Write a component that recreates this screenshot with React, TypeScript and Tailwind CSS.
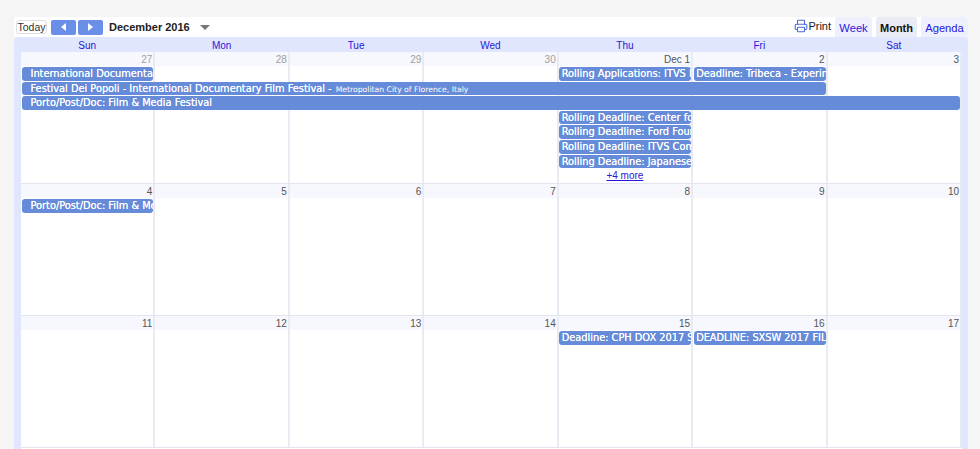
import { Printer } from 'lucide-react';

type CalEvent = { title: string; where?: string; col: string; row: string; sunday?: boolean };
type Week = { days: { label: string; muted?: boolean }[]; events: CalEvent[]; more?: boolean };

const dayNames = ['Sun', 'Mon', 'Tue', 'Wed', 'Thu', 'Fri', 'Sat'];

const columns = ['col-start-1', 'col-start-2', 'col-start-3', 'col-start-4', 'col-start-5', 'col-start-6', 'col-start-7'];

const weeks: Week[] = [
  {
    days: [
      { label: '27', muted: true },
      { label: '28', muted: true },
      { label: '29', muted: true },
      { label: '30', muted: true },
      { label: 'Dec 1' },
      { label: '2' },
      { label: '3' },
    ],
    events: [
      { title: 'International Documentary Film Festival', col: 'col-start-1', row: 'row-start-2', sunday: true },
      { title: 'Rolling Applications: ITVS Linear', col: 'col-start-5', row: 'row-start-2' },
      { title: 'Deadline: Tribeca - Experiments', col: 'col-start-6', row: 'row-start-2' },
      {
        title: 'Festival Dei Popoli - International Documentary Film Festival -',
        where: 'Metropolitan City of Florence, Italy',
        col: 'col-start-1 col-span-6',
        row: 'row-start-3',
        sunday: true,
      },
      { title: 'Porto/Post/Doc: Film & Media Festival', col: 'col-start-1 col-span-7', row: 'row-start-4', sunday: true },
      { title: 'Rolling Deadline: Center for Asian', col: 'col-start-5', row: 'row-start-5' },
      { title: 'Rolling Deadline: Ford Foundation', col: 'col-start-5', row: 'row-start-6' },
      { title: 'Rolling Deadline: ITVS Community', col: 'col-start-5', row: 'row-start-7' },
      { title: 'Rolling Deadline: Japanese Foundation', col: 'col-start-5', row: 'row-start-8' },
    ],
    more: true,
  },
  {
    days: ['4', '5', '6', '7', '8', '9', '10'].map((label) => ({ label })),
    events: [{ title: 'Porto/Post/Doc: Film & Media Festival', col: 'col-start-1', row: 'row-start-2', sunday: true }],
  },
  {
    days: ['11', '12', '13', '14', '15', '16', '17'].map((label) => ({ label })),
    events: [
      { title: 'Deadline: CPH DOX 2017 Submissions', col: 'col-start-5', row: 'row-start-2' },
      { title: 'DEADLINE: SXSW 2017 FILM', col: 'col-start-6', row: 'row-start-2' },
    ],
  },
];

function EventBar({ event }: { event: CalEvent }) {
  return (
    <div
      className={`${event.col} ${event.row} z-10 ml-[0.5px] mr-[2px] mt-px h-[13.6px] overflow-hidden whitespace-nowrap rounded-[3px] bg-[#668cd9] font-['DejaVu_Sans',sans-serif] text-[9.8px] leading-[13.6px] text-white [text-shadow:0_0_0.3px_#ffffff] ${event.sunday ? 'pl-[9px]' : 'pl-[2.5px]'}`}
    >
      {event.title}
      {event.where && <span className="ml-1 text-[7.7px] [text-shadow:none]">{event.where}</span>}
    </div>
  );
}

function WeekRow({ week }: { week: Week }) {
  return (
    <div className="grid h-[132px] grid-cols-7 grid-rows-[14px_repeat(8,14.6px)_1fr] border-b border-[#e3e5ee]">
      {week.days.map((day, i) => (
        <div key={i} className={`${columns[i]} row-start-1 -row-end-1 border-r-2 border-[#e9ebf3] bg-white`} />
      ))}
      {week.days.map((day, i) => (
        <div
          key={i}
          className={`${columns[i]} row-start-1 z-10 border-r-2 border-[#e9ebf3] bg-[#f6f8fe] pr-[1px] text-right text-[10px] leading-[15px] ${day.muted ? 'text-[#a0a0a0]' : 'text-[#555555]'}`}
        >
          {day.label}
        </div>
      ))}
      {week.events.map((event) => (
        <EventBar key={event.title + event.col} event={event} />
      ))}
      {week.more && (
        <a className="col-start-5 row-start-9 z-10 pr-[2px] pt-[1px] text-center text-[10px] leading-[13px] text-[#2a16d8] underline">
          +4 more
        </a>
      )}
    </div>
  );
}

export default function App() {
  return (
    <div className="h-[449px] overflow-hidden bg-[#f5f5f5] pl-[14px] pr-3 pt-[17px] font-['Liberation_Sans',Arial,sans-serif]">
      <div className="flex h-5 items-center bg-white pl-[2px]">
        <button className="h-[14px] w-[31px] rounded-[3px] border border-[#dddddd] bg-white text-[10.5px] leading-[12px] text-[#333333]">
          Today
        </button>
        <button className="ml-1 flex h-[15px] w-[25px] items-center justify-center rounded-[2px] bg-[#6a8fe8]">
          <span className="h-0 w-0 border-y-[4px] border-r-[5px] border-y-transparent border-r-white" />
        </button>
        <button className="ml-[2px] flex h-[15px] w-[25px] items-center justify-center rounded-[2px] bg-[#6a8fe8]">
          <span className="h-0 w-0 border-y-[4px] border-l-[5px] border-y-transparent border-l-white" />
        </button>
        <span className="ml-[6px] text-[11px] font-bold text-[#222222]">December 2016</span>
        <span className="ml-[10px] mt-[1px] h-0 w-0 border-x-[5px] border-t-[5px] border-x-transparent border-t-[#777777]" />
        <div className="ml-auto flex h-5 items-stretch">
          <div className="mr-[4px] flex items-center pb-[2px]">
            <Printer className="h-[14px] w-[14px] text-[#4a68d8]" strokeWidth={1.8} />
            <span className="text-[11px] text-[#222222]">Print</span>
          </div>
          <div className="flex w-[37px] items-center justify-center rounded-t-[3px] bg-[#eef1fd] pt-[2px] text-[11.2px] text-[#2a16d8]">Week</div>
          <div className="ml-[4px] flex w-[41px] items-center justify-center rounded-t-[3px] bg-[#eaecf5] pt-[2px] text-[11px] font-bold text-[#111111]">Month</div>
          <div className="ml-[4px] flex w-[47px] items-center justify-center rounded-t-[3px] bg-[#eef1fd] pt-[2px] text-[11.2px] text-[#2a16d8]">Agenda</div>
        </div>
      </div>
      <div className="rounded-t-[3px] bg-[#e0e6fd] pl-[7px] pr-[6px] pb-2">
        <div className="grid h-[15px] grid-cols-7">
          {dayNames.map((name) => (
            <div key={name} className="pr-[2px] text-center text-[10px] leading-[17px] text-[#2a16d8]">
              {name}
            </div>
          ))}
        </div>
        {weeks.map((week, i) => (
          <WeekRow key={i} week={week} />
        ))}
        <div className="h-[20px] bg-white" />
      </div>
    </div>
  );
}
